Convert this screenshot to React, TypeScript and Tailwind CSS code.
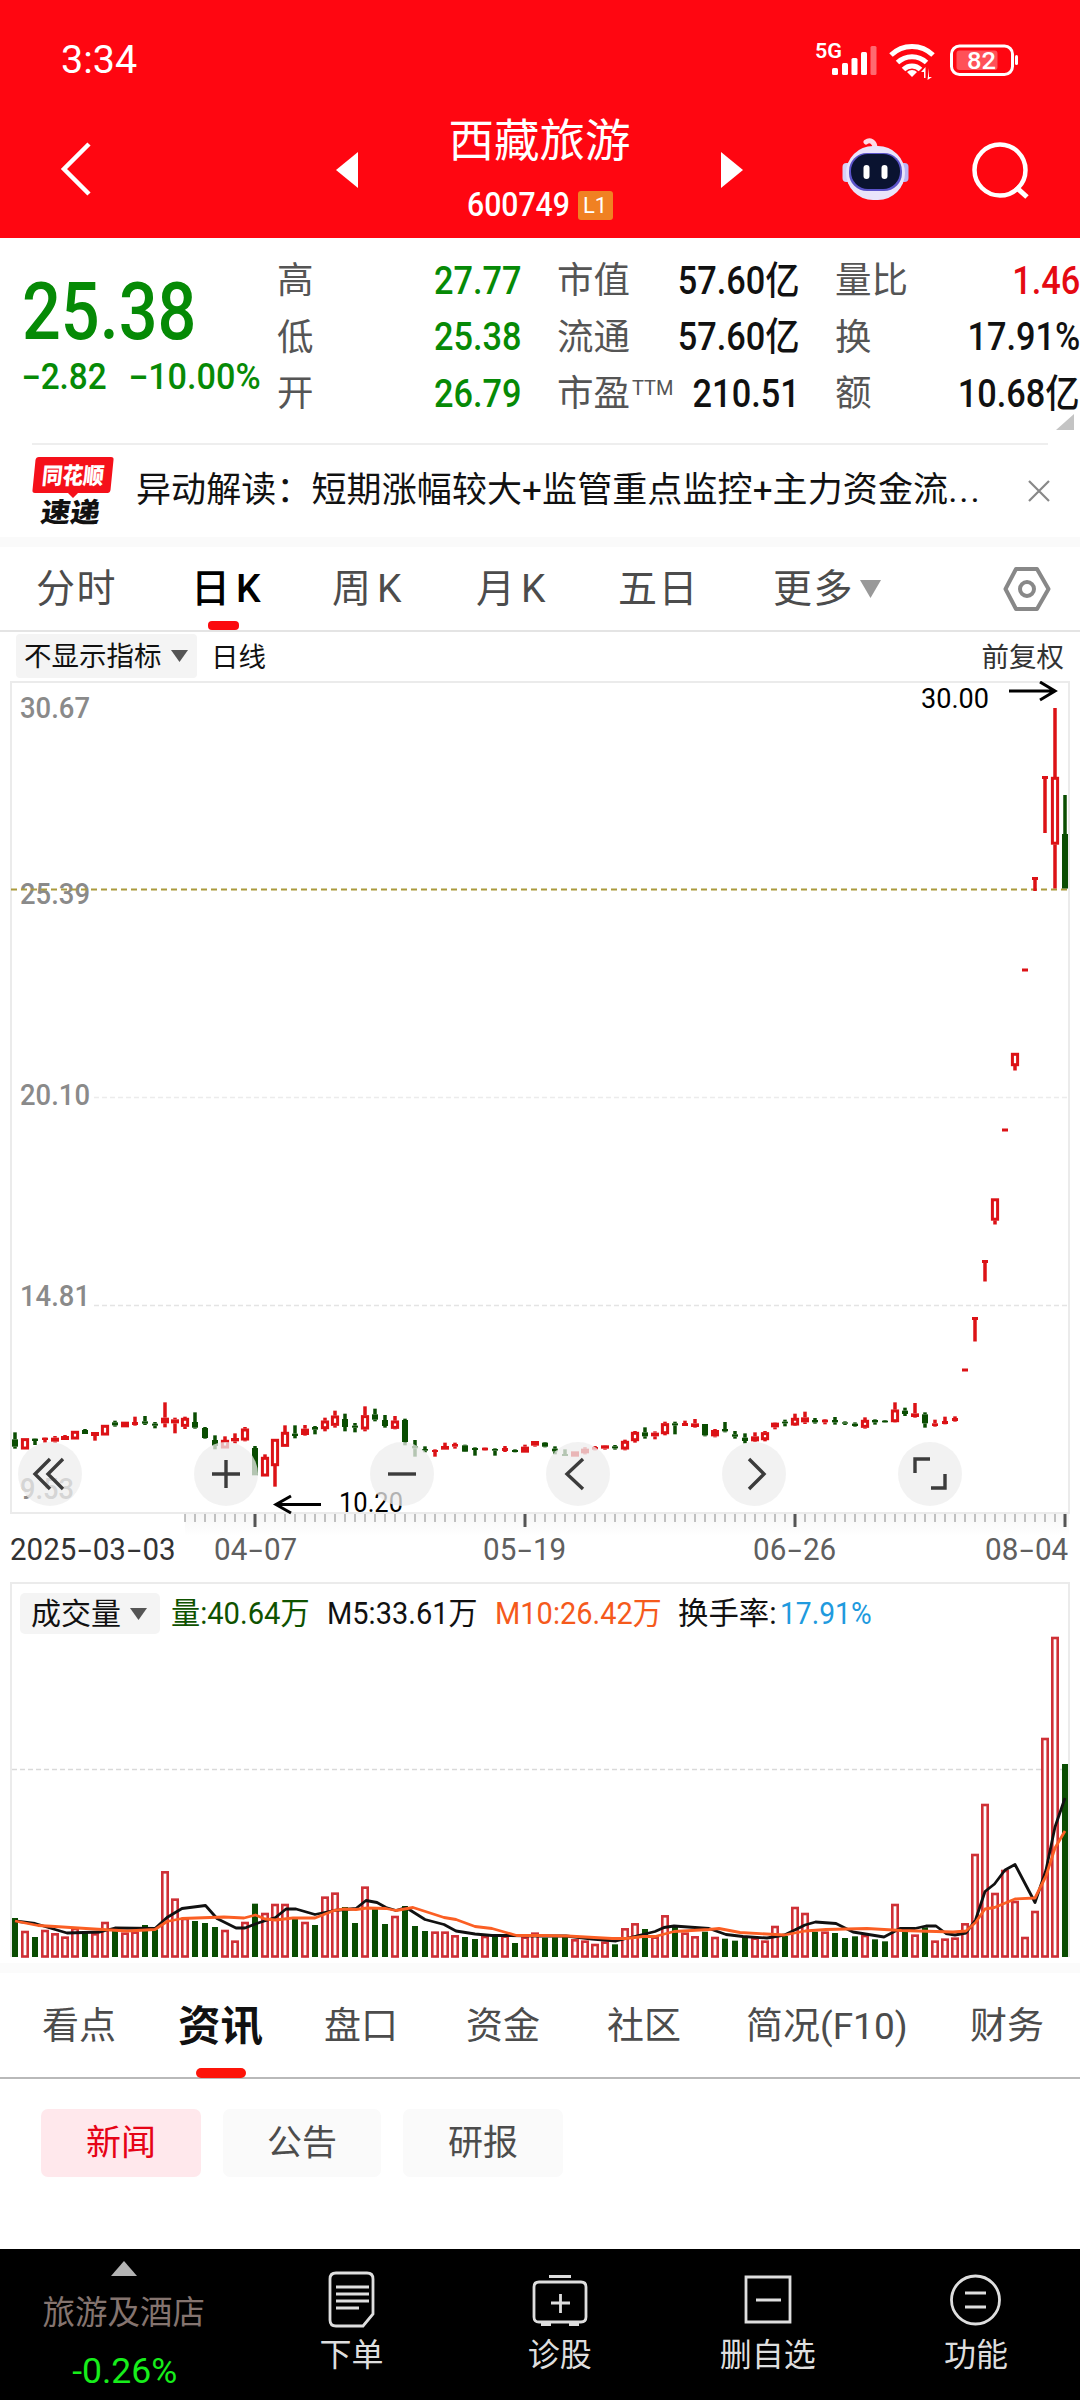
import { useState } from "react";
import clsx from "clsx";

// r = up day, g = down day; h: high, t: body top, b: body bottom, l: low (px from 1360, x3)
const candleRows = `g 217 238 260 266|r 235 235 268 268|g 235 236 243 255|r 232 233 240 248|r 228 233 245 248|r 225 228 240 240|r 213 213 238 238|g 207 210 222 222|r 216 216 228 242|r 195 195 226 226|g 182 187 196 200|r 185 185 202 202|r 170 186 195 197|g 168 184 191 195|g 186 191 197 205|r 127 173 190 202|r 173 178 190 220|r 170 174 200 207|g 157 186 203 206|g 201 204 234 236|g 226 240 258 268|r 229 240 265 265|r 220 234 244 250|r 201 206 241 244|g 258 264 346 346|r 283 291 349 349|r 237 237 318 380|r 196 216 260 260|g 196 221 228 235|r 195 206 225 227|g 198 201 209 223|r 173 182 207 214|r 152 167 197 203|g 161 177 201 214|g 189 197 203 217|r 139 166 208 214|g 146 163 179 184|g 165 180 198 203|r 168 182 206 208|g 176 180 246 256|g 240 258 265 290|g 259 267 272 277|r 268 270 276 290|r 248 258 269 269|r 248 252 260 266|g 254 256 275 276|g 262 264 270 287|r 262 263 271 272|g 265 267 272 287|r 258 264 273 276|g 268 270 276 277|r 254 260 278 278|r 243 243 257 260|g 246 248 260 262|g 259 266 274 283|g 268 282 288 288|r 274 274 290 290|r 262 266 280 283|r 258 261 269 271|r 255 256 266 269|g 255 259 265 269|r 239 243 268 271|r 213 216 243 248|g 202 217 229 236|r 214 218 229 238|r 185 190 222 226|g 185 190 196 223|r 182 189 198 198|r 177 190 201 203|g 192 192 226 229|r 207 210 229 232|g 186 207 214 217|g 213 223 230 236|g 220 233 243 250|r 217 229 244 246|r 213 217 240 244|r 187 188 202 208|g 179 185 190 199|r 161 174 196 198|r 155 172 187 192|g 174 180 187 191|r 177 179 187 193|g 171 180 187 194|g 184 187 191 195|g 187 191 198 200|r 172 180 203 206|g 178 180 187 194|g 180 182 187 188|r 127 149 186 187|g 143 152 162 168|r 129 160 171 173|g 157 163 190 203|r 179 190 198 200|r 170 183 192 193|r 169 174 183 185`;

const candles = candleRows.split("|").map((row) => {
  const [c, ...v] = row.split(" ");
  return { up: c === "r", v: v.map((n) => 1360 + Number(n) / 3) };
});
const rally: [boolean, number[]][] = [
  [true, [1368.5, 1368.5, 1371.5, 1371.5]],
  [true, [1317, 1317, 1320, 1341.5]],
  [true, [1260, 1260, 1263, 1281.5]],
  [true, [1198.5, 1198.5, 1220.5, 1224.5]],
  [true, [1128.5, 1128.5, 1131.5, 1131.5]],
  [true, [1053, 1053, 1066, 1070.5]],
  [true, [968.5, 968.5, 971.5, 971.5]],
  [true, [877, 877, 880, 891]],
  [true, [776, 776, 779, 833]],
  [true, [708, 777, 844.5, 888.5]],
  [false, [795, 834, 888.5, 888.5]],
];
rally.forEach(([up, v]) => candles.push({ up, v }));

const volumes = [
  234, 273, 291, 270, 280, 290, 264, 275, 280, 246, 270, 278, 275, 255, 268, 94,
  176, 234, 243, 249, 261, 270, 302, 246, 191, 219, 192, 192, 237, 246, 255,
  170, 158, 201, 249, 140, 205, 252, 228, 198, 258, 273, 275, 275, 286, 291,
  297, 288, 289, 287, 309, 290, 278, 293, 292, 290, 298, 302, 312, 305, 313,
  265, 250, 267, 290, 226, 260, 278, 289, 275, 291, 296, 302, 290, 293, 302,
  258, 288, 201, 219, 275, 275, 279, 294, 289, 285, 298, 304, 192, 275, 284,
  262, 302, 296, 293, 250, 42, -108, 159, 90, 183, 291, 213, -306, -609, -228,
];

const m5 =
  "15,1921 35,1923.5 45,1926.5 67,1933 100,1932 115,1928 155,1928.5 167,1917.5 182,1908.5 205.500,1905.5 217,1918.5 236,1928 245,1928 258,1923 275.500,1917.5 286,1909 296,1909 315,1914.5 334,1910.5 356,1908.5 366,1900.5 377,1902.5 386,1907.5 396,1910.5 406,1907.5 425,1919.5 444,1924.5 456,1931 475,1934 492,1935.5 510,1935.5 540,1936 566,1936 592,1939 616,1941 655,1931.5 664,1927.5 674,1926 709,1928.5 726,1934.5 743,1936.5 767,1938 784.500,1935 805,1925 815.500,1922 836,1923.5 853,1932 884,1937 900,1928.5 915,1928.5 926,1926 936,1926 946,1933.5 955,1935 966,1933 975.500,1920 985,1891.5 994.500,1884 1005,1870 1015,1864.5 1035,1902.5 1046,1870 1055,1827 1065,1798";
const m10 =
  "15,1921 38,1925.5 55,1926.5 86,1928.5 127,1931 155,1929.5 167,1921.5 182,1918.5 224,1917 244,1918 255.500,1915 265,1919 275.500,1920 293,1918 315,1918 334,1910.5 344,1909 356,1909.5 367,1908 386,1908.5 396,1910.5 413,1907.5 427,1912 444,1917.5 456,1919.5 475,1926.5 492,1928.5 516.500,1935.5 540,1935.5 567.500,1936 612,1938.5 626,1938.5 643,1936.5 655,1936.5 674,1931.5 709,1929.5 719,1928.5 740,1932.5 784.500,1935 805,1931 826,1929.5 867,1928.5 901.500,1930.5 953,1932 966,1931 975.500,1922.5 985,1909 994.500,1907.5 1015,1899 1035,1898 1046,1876 1055,1848 1065,1831";

const RED = "#dc1216";
const GREEN = "#0a4d02";

// digits drawn a little narrower than Roboto's own width
function Num({ children, className }: { children: string; className?: string }) {
  return (
    <span className={clsx("inline-block whitespace-nowrap", className)}>
      {children.split("").map((ch, i) =>
        ch === "-" ? (
          <span key={i} className="inline-block w-[0.56em] scale-x-[1.7] text-center">
            -
          </span>
        ) : (
          ch
        )
      )}
    </span>
  );
}

function StatusBar() {
  return (
    <div className="flex h-[110px] items-center pl-[61px] pt-[9px]">
      <span className="w-[754px] text-[39.500px] leading-none">3:34</span>
      <svg width="205" height="40" viewBox="815 39 205 40" fill="white">
        <text x="815" y="57" fontSize="21" fontWeight="600" textLength="27" lengthAdjust="spacingAndGlyphs">
          5G
        </text>
        <rect x="832" y="67" width="6" height="7" rx="1.500" />
        <rect x="842" y="62" width="6" height="12" rx="1.500" />
        <rect x="851.500" y="57" width="6" height="17" rx="1.500" />
        <rect x="861" y="51" width="6" height="23" rx="1.500" />
        <rect x="870.500" y="45" width="6" height="29" rx="1.500" opacity="0.4" />
        <g fill="none" stroke="white" strokeWidth="5">
          <path d="M891 54a30 30 0 0 1 42 0" />
          <path d="M897.500 61.500a21 21 0 0 1 29 0" />
          <path d="M903.500 68.500a12 12 0 0 1 17 0" />
        </g>
        <path d="M912 76l-5-5a7 7 0 0 1 10 0z" />
        <path d="M924 77v-6h-3l4.500-5v11zM929 67v9h3l-4.500 3z" />
        <rect x="951.500" y="45" width="61" height="28.500" rx="8" fill="none" stroke="white" strokeWidth="3" />
        <rect x="956.500" y="49.500" width="41" height="19.500" rx="3" opacity="0.3" />
        <rect x="1015" y="54" width="3" height="10" rx="1.500" />
        <text x="967" y="68" fontSize="24" fontWeight="500" textLength="29" lengthAdjust="spacingAndGlyphs">
          82
        </text>
      </svg>
    </div>
  );
}

function RobotIcon() {
  return (
    <svg width="68" height="66" viewBox="0 0 68 66">
      <path d="M33 12C33 6 28 3 24 6" fill="none" stroke="#ffd9e6" strokeWidth="5" strokeLinecap="round" />
      <rect x="0.500" y="27" width="9" height="19" rx="4" fill="#d5d2f8" />
      <rect x="57.500" y="27" width="9" height="19" rx="4" fill="#b9b4f4" />
      <rect x="4" y="10" width="59" height="54" rx="27" fill="#e9e4fb" />
      <rect x="7" y="17" width="53" height="38" rx="18" fill="#5b53c9" />
      <rect x="9" y="18" width="49" height="35" rx="17" fill="#0a1330" />
      <rect x="21.500" y="29" width="6" height="14" rx="3" fill="white" />
      <rect x="39.500" y="29" width="6" height="14" rx="3" fill="white" />
    </svg>
  );
}

function Header() {
  return (
    <header className="h-[238px] bg-[#ff0611] text-white">
      <StatusBar />
      <div className="flex h-[128px] items-start">
        <svg className="mt-[31px] ml-[59px]" width="34" height="56" fill="none" stroke="white" strokeWidth="4.500">
          <path d="M30 3L5 28l25 25" />
        </svg>
        <svg className="mt-[42px] ml-[243px]" width="22" height="36" fill="white">
          <path d="M22 0v36L0 18z" />
        </svg>
        <div className="flex w-[363px] flex-col items-center pt-[6px]">
          <h1 className="text-[45.500px] leading-[52px]">西藏旅游</h1>
          <div className="mt-[19px] flex h-[36px] items-center">
            <Num className="w-[111px] origin-left scale-x-[0.9] text-[33.500px] leading-none font-medium">600749</Num>
            <span className="h-[29px] w-[35px] rounded-[3px] bg-[#f08122] text-center text-[22px] leading-[30px]">L1</span>
          </div>
        </div>
        <svg className="mt-[42px]" width="22" height="36" fill="white">
          <path d="M0 0v36l22-18z" />
        </svg>
        <div className="mt-[26px] ml-[99px]">
          <RobotIcon />
        </div>
        <svg className="mt-[29px] ml-[60px]" width="60" height="62" fill="none" stroke="white" strokeWidth="4.500">
          <circle cx="30" cy="31" r="25.500" />
          <path d="M46 48l11 10" strokeWidth="5" />
        </svg>
      </div>
    </header>
  );
}

const quoteCols = [
  {
    width: "w-[245px]",
    rows: [
      ["高", "27.77", "text-[#068a06]"],
      ["低", "25.38", "text-[#068a06]"],
      ["开", "26.79", "text-[#068a06]"],
    ],
  },
  {
    width: "w-[243px]",
    rows: [
      ["市值", "57.60亿", "text-[#111]"],
      ["流通", "57.60亿", "text-[#111]"],
      ["市盈", "210.51", "text-[#111]"],
    ],
  },
  {
    width: "w-[245px]",
    rows: [
      ["量比", "1.46", "text-[#e50a12]"],
      ["换", "17.91%", "text-[#111]"],
      ["额", "10.68亿", "text-[#111]"],
    ],
  },
];

function Quote() {
  return (
    <section className="relative flex h-[205px] text-[#068a06]">
      <div className="w-[277px] pt-[36px] pl-[22px]">
        <Num className="origin-left scale-x-[0.865] text-[79px] leading-[76px] font-medium">25.38</Num>
        <div className="mt-[7px] flex text-[37px] leading-[40px] font-medium">
          <Num className="w-[107px] origin-left scale-x-[0.9]">-2.82</Num>
          <Num className="origin-left scale-x-[0.925]">-10.00%</Num>
        </div>
      </div>
      <div className="flex gap-[35px] pt-[15px]">
        {quoteCols.map((col) => (
          <div key={col.rows[0][0]} className={col.width}>
            {col.rows.map(([label, value, color]) => (
              <div key={label} className="flex h-[56.500px] items-center justify-between">
                <span className="flex text-[36.500px] leading-none text-[#555]">
                  {label}
                  {label === "市盈" && <sup className="top-0 pl-[2px] text-[20px] leading-[24px]">TTM</sup>}
                </span>
                <span className={clsx("flex w-0 justify-end", color)}>
                  <Num className="origin-right scale-x-[0.88] text-[39px] leading-none font-medium">{value}</Num>
                </span>
              </div>
            ))}
          </div>
        ))}
      </div>
      <svg className="absolute right-[6px] bottom-[13px]" width="18" height="16" fill="#c4c4c4">
        <path d="M18 0v16H0z" />
      </svg>
    </section>
  );
}

function NewsLine() {
  return (
    <section className="h-[104px] border-b-[10px] border-[#fafafa]">
      <div className="mx-[32px] flex h-[94px] items-center border-t-2 border-[#eee]">
        <svg width="82" height="84" viewBox="0 -7 82 84" fontWeight="900" className="mt-[2px] shrink-0 overflow-visible">
          <path d="M7 0h72q3 0 2.500 3l-3 30q-.5 3-3 3H46l-5 5-5-5H3q-3 0-2.500-3L3.500 3q.5-3 3.500-3z" fill="#f5101a" />
          <text x="9" y="27" fontSize="23" fill="white" transform="skewX(-6) translate(3 0)" textLength="62" lengthAdjust="spacingAndGlyphs">
            同花顺
          </text>
          <text x="8" y="64" fontSize="27" fill="#111" transform="skewX(-8) translate(9 1)" textLength="59" lengthAdjust="spacingAndGlyphs">
            速递
          </text>
        </svg>
        <p className="ml-[22px] w-[892px] shrink-0 text-[35px] leading-[44px] tracking-[0.1px] whitespace-nowrap text-[#111]">
          异动解读：短期涨幅较大+监管重点监控+主力资金流<span className="tracking-[2px]">...</span>
        </p>
        <svg width="22" height="22" fill="none" stroke="#888" strokeWidth="2.200" className="shrink-0">
          <path d="M1 1l20 20M21 1L1 21" />
        </svg>
      </div>
    </section>
  );
}

const periods = [
  ["分时", "w-[155px]"],
  ["日K", "w-[141px]"],
  ["周K", "w-[144px]"],
  ["月K", "w-[142px]"],
  ["五日", "w-[155px]"],
  ["更多", "w-[86px]"],
];

function PeriodTabs() {
  const [active, setActive] = useState("日K");
  return (
    <nav className="flex h-[85px] items-center border-b-2 border-[#e4e4e4] pl-[36px] text-[39px] leading-[60px]">
      {periods.map(([name, width]) => (
        <button
          key={name}
          onClick={() => setActive(name)}
          className={clsx(
            "relative h-[85px] text-left",
            width,
            name.endsWith("K") ? "tracking-[6px]" : "tracking-[1.500px]",
            name === active ? "font-medium text-black" : "text-[#4c4c4c]"
          )}
        >
          {name}
          {name === active && <i className="absolute bottom-[1px] left-[17px] h-[9px] w-[31px] rounded-[4px] bg-[#fb0a0e]" />}
        </button>
      ))}
      <svg className="ml-[1px]" width="21" height="18" fill="#999">
        <path d="M0 0h21L10.500 18z" />
      </svg>
      <svg className="ml-[122px]" width="48" height="46" fill="none" stroke="#888" strokeWidth="4">
        <path d="M13 3h21l11.500 20L34 43H13L2.500 23z" strokeLinejoin="round" />
        <circle cx="24" cy="23" r="7" />
      </svg>
    </nav>
  );
}

function IndicatorRow() {
  return (
    <div className="flex h-[49px] items-start pl-[16px] pt-[2px] text-[27.500px] leading-[47px] text-[#111]">
      <div className="flex h-[44px] w-[181px] items-center rounded-[4px] bg-[#f4f4f4] pl-[8px]">
        不显示指标
        <svg className="ml-[9px]" width="17" height="12" fill="#555">
          <path d="M0 0h17L8.500 12z" />
        </svg>
      </div>
      <span className="ml-[14px]">日线</span>
      <span className="mr-[16px] ml-auto text-[#333]">前复权</span>
    </div>
  );
}

function Candle({ x, up, v }: { x: number; up: boolean; v: number[] }) {
  const [h, t, b, l] = v;
  const color = up ? RED : GREEN;
  const hollow = up && b - t > 7;
  const w = up ? (b - t < 3.1 ? 6 : 8) : 6;
  return (
    <g>
      {h < t && <path d={`M${x} ${h}V${t}`} stroke={color} strokeWidth="3.500" />}
      {l > b && <path d={`M${x} ${b}V${l}`} stroke={color} strokeWidth="3.500" />}
      {hollow ? (
        <rect x={x - 2.6} y={t + 1.3} width="5.200" height={b - t - 2.6} fill="white" stroke={color} strokeWidth="3" />
      ) : (
        <rect x={x - w / 2} y={t} width={w} height={b - t} fill={color} />
      )}
    </g>
  );
}

const axis: [string, number, number][] = [
  ["30.67", 718, 68],
  ["25.39", 904, 68],
  ["20.10", 1105, 68],
  ["14.81", 1306, 68],
  ["9.53", 1499, 52],
];

const toolIcons = [
  "M32 15L17 30l15 15M45 15L30 30l15 15",
  "M18 32h28M32 18v28",
  "M18 32h28",
  "M37 17L21 32l16 15",
  "M27 17l15 15-15 15",
  "M17 31V17h15M33 46h14V32",
];

function KChart() {
  return (
    <section className="relative h-[900px]">
      <svg className="block" width="1080" height="900" viewBox="0 681 1080 900">
        <defs>
          <linearGradient id="fade" x1="0" x2="0" y1="0" y2="1">
            <stop offset="0" stopColor="#f6f6f6" />
            <stop offset="1" stopColor="#ffffff" />
          </linearGradient>
        </defs>
        <rect x="185" y="1514" width="884" height="22" fill="url(#fade)" />
        <rect x="11" y="682" width="1058" height="831" fill="none" stroke="#ebebeb" strokeWidth="2" />
        <g stroke="#e4e4e4" strokeWidth="1.500" strokeDasharray="5 3">
          <path d="M94 1097.500H1069" opacity="0.700" />
          <path d="M94 1305.500H1069" />
        </g>
        <g fill="#8a8a8a" fontSize="30" fontWeight="500">
          {axis.map(([label, y, len]) => (
            <text key={label} x="20" y={y} textLength={len + 2} lengthAdjust="spacingAndGlyphs">
              {label}
            </text>
          ))}
        </g>
        <path d="M11 889.500H1069" stroke="#aa9a3c" strokeWidth="1.800" strokeDasharray="6 4" />
        {candles.map((c, i) => (
          <Candle key={i} x={15 + i * 10} up={c.up} v={c.v} />
        ))}
        <g fill="black" fontSize="27">
          <text x="921" y="708" textLength="68" lengthAdjust="spacingAndGlyphs">30.00</text>
          <text x="339" y="1512" textLength="64" lengthAdjust="spacingAndGlyphs">10.20</text>
        </g>
        <g fill="none" stroke="black" strokeWidth="3">
          <path d="M1009 691H1054M1040 682l15 9-15 9" />
          <path d="M321 1504.500H276M291 1496l-15 8.500 15 8.500" />
        </g>
        {Array.from({ length: 89 }, (_, i) => 185 + i * 10).map((x) => {
          const major = (x - 255) % 270 === 0;
          return (
            <path
              key={x}
              d={`M${x} 1514V${major ? 1527 : 1522}`}
              stroke={major ? "#555" : "#888"}
              strokeWidth={major ? 3 : 1}
            />
          );
        })}
      </svg>
      <div className="absolute top-[761px] left-[18px] flex gap-[112px]">
        {toolIcons.map((d, i) => (
          <button key={d} className="size-[64px] rounded-full bg-[#eeeeee]/75">
            <svg width="64" height="64" fill="none" stroke="#3c3c3c" strokeWidth="3.400">
              <path d={d} transform={i === 0 ? "translate(0 2)" : undefined} />
            </svg>
          </button>
        ))}
      </div>
      <div className="absolute top-[849px] left-[10px] flex w-[1062px] text-[31px] leading-[40px] text-[#5f5f5f]">
        <Num className="w-[205px] origin-left scale-x-[0.95] text-[#333]">2025-03-03</Num>
        <Num className="w-[270px] origin-left scale-x-[0.955]">04-07</Num>
        <Num className="w-[270px] origin-left scale-x-[0.955]">05-19</Num>
        <Num className="w-[233px] origin-left scale-x-[0.955]">06-26</Num>
        <Num className="origin-left scale-x-[0.955]">08-04</Num>
      </div>
    </section>
  );
}

function VolumeChart() {
  return (
    <section className="relative h-[392px] border-b-[10px] border-[#fbfbfb]">
      <svg className="block" width="1080" height="382" viewBox="0 1581 1080 382">
        <path d="M11 1957V1583H1069V1957" fill="none" stroke="#ebebeb" strokeWidth="2" />
        <path d="M12 1769.500H1068" stroke="#d9d9d9" strokeWidth="1.500" strokeDasharray="5 3" />
        {volumes.map((v, i) => {
          const x = 15 + i * 10;
          const y = 1840 + v / 3;
          return candles[i].up ? (
            <rect key={i} x={x - 2.7} y={y + 1} width="5.400" height={1955.5 - y} fill="white" stroke="#cf3036" strokeWidth="2.600" />
          ) : (
            <rect key={i} x={x - 3} y={y} width="6" height={1957 - y} fill={GREEN} />
          );
        })}
        <g fill="none" strokeWidth="2.800" strokeLinejoin="round">
          <polyline points={m5} stroke="#111" />
          <polyline points={m10} stroke="#fb5f24" />
        </g>
      </svg>
      <div className="absolute top-[12px] left-[20px] flex h-[41px] items-center text-[31px] leading-[43px]">
        <div className="flex h-[41px] w-[140px] items-center rounded-[5px] bg-[#f4f4f4] pl-[11px] text-[30px] text-[#111]">
          成交量
          <svg className="ml-[9px]" width="17" height="12" fill="#555">
            <path d="M0 0h17L8.500 12z" />
          </svg>
        </div>
        <Num className="ml-[11px] w-[156px] origin-left scale-x-[0.94] text-[#0f5200]">量:40.64万</Num>
        <Num className="w-[168px] origin-left scale-x-[0.935] text-[#111]">M5:33.61万</Num>
        <Num className="w-[183px] origin-left scale-x-[0.935] text-[#f55a1c]">M10:26.42万</Num>
        <Num className="w-[102px] origin-left scale-x-[0.98] text-[#111]">换手率:</Num>
        <Num className="origin-left scale-x-[0.91] text-[#209ade]">17.91%</Num>
      </div>
    </section>
  );
}

const infoTabs = [
  ["看点", "w-[136px]"],
  ["资讯", "w-[146px]"],
  ["盘口", "w-[142px]"],
  ["资金", "w-[141px]"],
  ["社区", "w-[139px]"],
  ["简况(F10)", "w-[224px]"],
  ["财务", "w-[100px]"],
];

function InfoSection() {
  const [tab, setTab] = useState("资讯");
  return (
    <section>
      <nav className="flex h-[106px] border-b-2 border-[#b9b9b9] pl-[42px] leading-[108px]">
        {infoTabs.map(([name, width]) => (
          <button
            key={name}
            onClick={() => setTab(name)}
            className={clsx(
              "relative h-[106px] text-left whitespace-nowrap",
              width,
              name === tab ? "text-[42.500px] font-bold text-[#111]" : "text-[37px] text-[#4c4c4c]"
            )}
          >
            {name}
            {name === tab && <i className="absolute bottom-[1px] left-[18px] h-[10px] w-[50px] rounded-[5px] bg-[#fd1409]" />}
          </button>
        ))}
      </nav>
      <div className="flex h-[170px] gap-[22px] pt-[30px] pl-[41px] text-center text-[35px] leading-[69px] text-[#4c4c4c]">
        <span className="h-[68px] w-[160px] rounded-[7px] bg-[#ffe8ec] text-[#e60316]">新闻</span>
        <span className="h-[68px] w-[158px] rounded-[7px] bg-[#fafafa]">公告</span>
        <span className="h-[68px] w-[160px] rounded-[7px] bg-[#fafafa]">研报</span>
      </div>
    </section>
  );
}

const actions = [
  {
    name: "下单",
    icon: (
      <>
        <path d="M12 4h31q6 0 6 6v35L39 57H12q-6 0-6-6V10q0-6 6-6z" />
        <path d="M12 18h33M12 25h33M12 32h33M12 39h23" />
      </>
    ),
  },
  {
    name: "诊股",
    icon: (
      <>
        <path d="M7 13h42q5 0 5 5v30q0 5-5 5H7q-5 0-5-5V18q0-5 5-5z" />
        <path d="M17 7.500h22M9 55.500h10M37 55.500h10M19 34h19M28.500 25v19" />
      </>
    ),
  },
  {
    name: "删自选",
    icon: <path d="M6 8h44v45H6zM16 31h25" />,
  },
  {
    name: "功能",
    icon: (
      <>
        <circle cx="27.500" cy="31" r="24" />
        <path d="M17 24h21M17 38h21" />
      </>
    ),
  },
];

function BottomBar() {
  return (
    <footer className="flex h-[151px] bg-black text-[#dedede]">
      <div className="flex w-[248px] flex-col items-center pt-[12px]">
        <svg width="26" height="15" fill="#b3b3b3">
          <path d="M13 0l13 15H0z" />
        </svg>
        <span className="mt-[17px] text-[32.500px] leading-[40px] text-[#84746f]">旅游及酒店</span>
        <span className="mt-[18px] pl-[2px] text-[35.500px] leading-[40px] text-[#17ee1b]">-0.26%</span>
      </div>
      {actions.map((a) => (
        <button key={a.name} className="flex w-[208.500px] flex-col items-center pt-[20px]">
          <svg width="56" height="60" fill="none" stroke="#dedede" strokeWidth="2.800">
            {a.icon}
          </svg>
          <span className="mt-[6px] text-[32px] leading-[40px]">{a.name}</span>
        </button>
      ))}
    </footer>
  );
}

export default function App() {
  return (
    <div className="h-[2400px] w-[1080px] overflow-hidden bg-white font-[Roboto,'Noto_Sans_CJK_SC',sans-serif]">
      <Header />
      <Quote />
      <NewsLine />
      <PeriodTabs />
      <IndicatorRow />
      <KChart />
      <VolumeChart />
      <InfoSection />
      <BottomBar />
    </div>
  );
}
